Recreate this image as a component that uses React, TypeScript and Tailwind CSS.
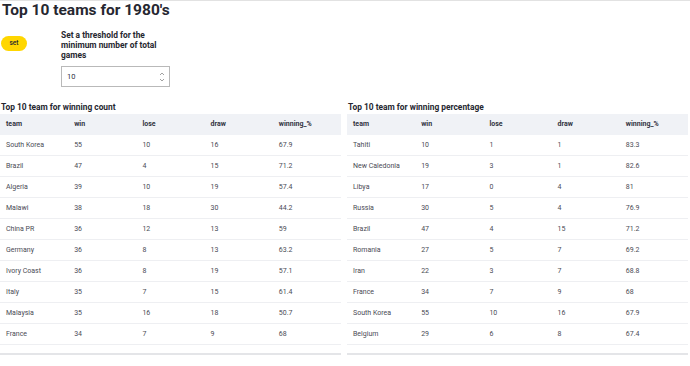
import React from "react";

type Row = [string, number, number, number, number];

const byCount: Row[] = [
  ["South Korea", 55, 10, 16, 67.9],
  ["Brazil", 47, 4, 15, 71.2],
  ["Algeria", 39, 10, 19, 57.4],
  ["Malawi", 38, 18, 30, 44.2],
  ["China PR", 36, 12, 13, 59],
  ["Germany", 36, 8, 13, 63.2],
  ["Ivory Coast", 36, 8, 19, 57.1],
  ["Italy", 35, 7, 15, 61.4],
  ["Malaysia", 35, 16, 18, 50.7],
  ["France", 34, 7, 9, 68],
];

const byPct: Row[] = [
  ["Tahiti", 10, 1, 1, 83.3],
  ["New Caledonia", 19, 3, 1, 82.6],
  ["Libya", 17, 0, 4, 81],
  ["Russia", 30, 5, 4, 76.9],
  ["Brazil", 47, 4, 15, 71.2],
  ["Romania", 27, 5, 7, 69.2],
  ["Iran", 22, 3, 7, 68.8],
  ["France", 34, 7, 9, 68],
  ["South Korea", 55, 10, 16, 67.9],
  ["Belgium", 29, 6, 8, 67.4],
];

function Table({ title, rows }: { title: string; rows: Row[] }) {
  const cols = ["team", "win", "lose", "draw", "winning_%"];
  return (
    <div className="w-[341px] flex flex-col">
      <div className="text-[8.4px] leading-[10px] font-bold text-[#262730] pl-[1px] mb-[2px]">{title}</div>
      <div className="grid grid-cols-5 h-[21px] items-center bg-[#f0f2f6] text-[7px] font-bold text-[#31333f]">
        {cols.map((c) => (
          <div key={c} className="pl-[6px]">{c}</div>
        ))}
      </div>
      {rows.map((r, i) => (
        <div
          key={i}
          className="grid grid-cols-5 h-[21px] items-center border-b border-[#eeeff2] text-[7px] text-[#4a4b55]"
        >
          {r.map((v, j) => (
            <div key={j} className="pl-[6px] whitespace-nowrap">{String(v)}</div>
          ))}
        </div>
      ))}
      <div className="mt-[8px] h-[2px] bg-[#e4e5e8]" />
    </div>
  );
}

export default function App() {
  return (
    <div
      className="w-[690px] h-[366px] bg-white border-t border-[#e2e2e2] overflow-hidden text-[#31333f]"
      style={{ fontFamily: "Roboto, 'Noto Sans', sans-serif" }}
    >
      <h1 className="text-[15.5px] leading-[16px] font-bold text-[#262730] pl-[2px] pt-[1px]">
        Top 10 teams for 1980's
      </h1>
      <div className="flex items-start mt-[12px]">
        <button className="ml-[1px] mt-[6px] w-[26px] h-[15px] rounded-full bg-[#ffd600] text-[6.5px] font-medium text-[#262730] flex items-center justify-center">
          set
        </button>
        <div className="ml-[34px] w-[109px] flex flex-col">
          <div className="text-[8.4px] leading-[10px] font-bold text-[#262730]">
            Set a threshold for the minimum number of total games
          </div>
          <div className="mt-[6px] h-[21px] border border-[#b9b9b9] flex items-center justify-between pl-[5px] pr-[4px]">
            <span className="text-[7.5px] text-[#31333f]">10</span>
            <svg width="6" height="12" viewBox="0 0 6 12" fill="none" stroke="#8a8a8a" strokeWidth="0.8">
              <path d="M1 4 L3 2 L5 4" />
              <path d="M1 8 L3 10 L5 8" />
            </svg>
          </div>
        </div>
      </div>
      <div className="flex gap-[6px] mt-[15px]">
        <Table title="Top 10 team for winning count" rows={byCount} />
        <Table title="Top 10 team for winning percentage" rows={byPct} />
      </div>
    </div>
  );
}
